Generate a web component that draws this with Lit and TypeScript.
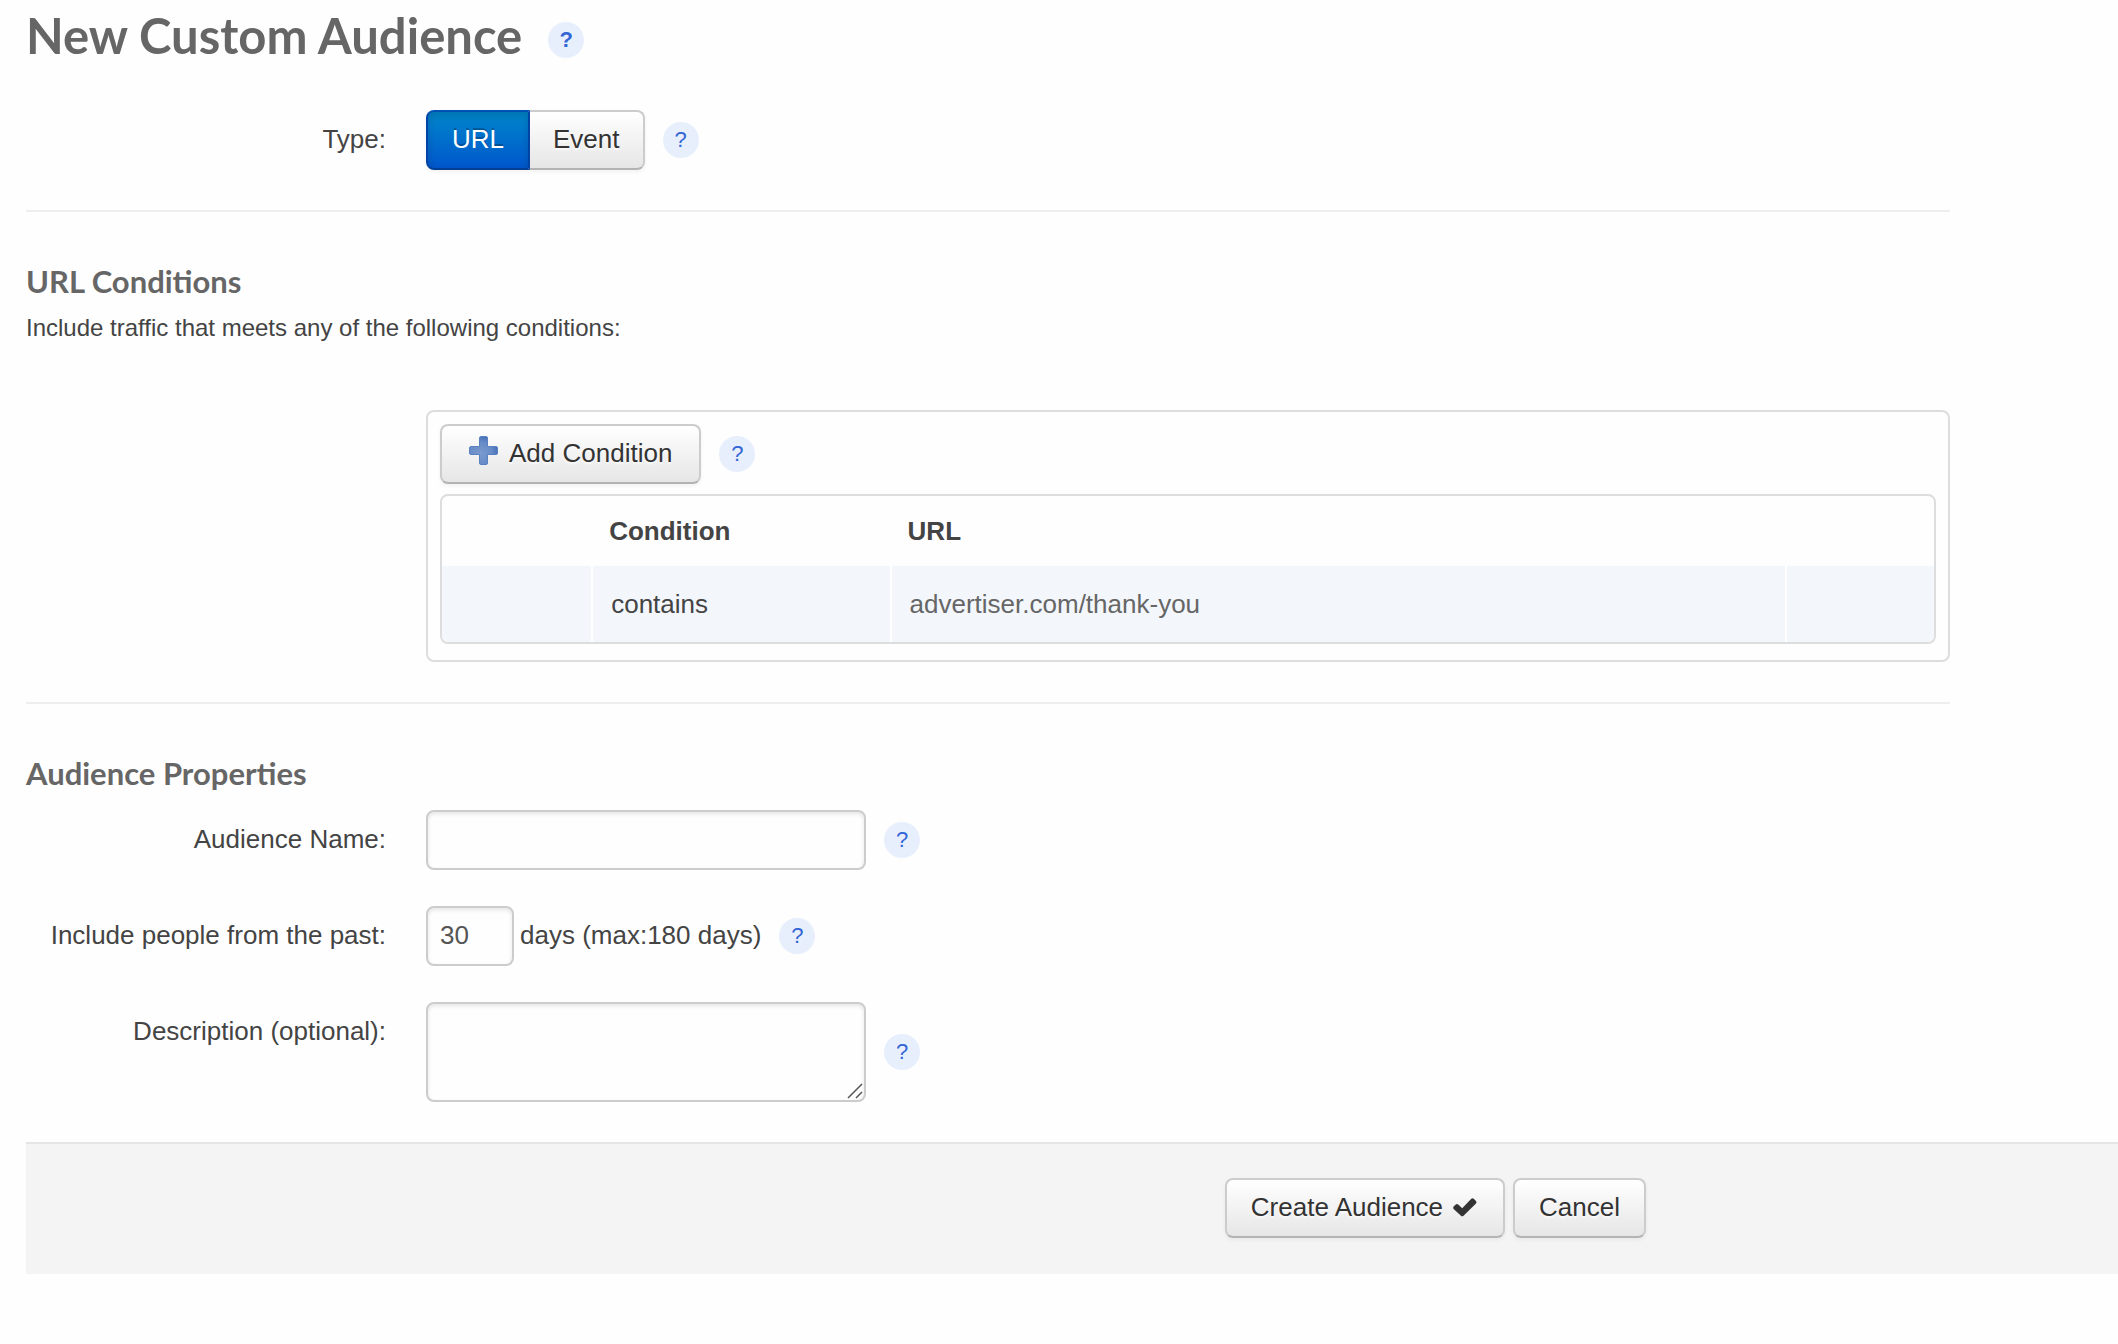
import { LitElement, html, css, svg } from "lit";
import { customElement, state } from "lit/decorators.js";
import { classMap } from "lit/directives/class-map.js";

@customElement("help-badge")
class HelpBadge extends LitElement {
  static styles = css`
    :host {
      display: block;
      flex: none;
    }
    .badge {
      display: flex;
      align-items: center;
      justify-content: center;
      width: 36px;
      height: 36px;
      margin: 0;
      padding: 0;
      border: 0;
      border-radius: 50%;
      background: #e8effc;
      color: #3366d6;
      font-family: inherit;
      font-size: 22px;
      font-weight: inherit;
      line-height: 36px;
      cursor: help;
    }
  `;

  render() {
    return html`<button class="badge" type="button">?</button>`;
  }
}

const plusIcon = html`
  <svg class="plus" width="29" height="29" viewBox="0 0 29 29" aria-hidden="true">
    <defs>
      <radialGradient id="plus-fill" cx="0.4" cy="0.6" r="0.65">
        <stop offset="0" stop-color="#7a9ace" />
        <stop offset="0.6" stop-color="#688cc8" />
        <stop offset="1" stop-color="#416db6" />
      </radialGradient>
    </defs>
    ${svg`<path
      d="M12 0.500h5a1.500 1.500 0 0 1 1.500 1.500v8.500h8.500a1.500 1.500 0 0 1 1.500 1.500v5a1.500 1.500 0 0 1-1.500 1.500h-8.500v8.500a1.500 1.500 0 0 1-1.500 1.500h-5a1.500 1.500 0 0 1-1.500-1.500v-8.500h-8.500a1.500 1.500 0 0 1-1.500-1.500v-5a1.500 1.500 0 0 1 1.500-1.500h8.500v-8.500a1.500 1.500 0 0 1 1.500-1.500z"
      fill="url(#plus-fill)" stroke="#5a82c0" stroke-width="1" />`}
  </svg>
`;

const checkIcon = html`
  <svg class="check" width="28" height="20" viewBox="0 0 28 20" aria-hidden="true">
    <path
      d="M2.600 9.600L4.800 7.400Q6 6.400 7.200 7.400L11.200 11.200L20.300 1.800Q21.500 0.700 22.700 1.800L25 4.100Q26 5.200 25 6.400L12.500 18.700Q11.200 19.700 10 18.700L2.600 11.900Q1.600 10.800 2.600 9.600Z"
      fill="#333"
    />
  </svg>
`;

@customElement("app-root")
class AppRoot extends LitElement {
  static styles = css`
    :host {
      display: block;
      min-height: 100vh;
      padding-left: 26px;
      box-sizing: border-box;
      background: #fefefe;
      color: #444;
      font-family: "Liberation Sans", Arial, Helvetica, sans-serif;
      font-size: 26px;
      line-height: 40px;
    }
    * {
      box-sizing: border-box;
    }
    .content {
      margin-right: 168px;
    }
    .title-row {
      display: flex;
      align-items: flex-end;
      gap: 26px;
      padding-top: 12px;
      font-weight: bold;
    }
    h1,
    h2 {
      margin: 0;
      color: #666;
      font-family: Lato, "Open Sans", sans-serif;
      font-weight: bold;
    }
    h1 {
      font-size: 49px;
      line-height: 46px;
    }
    h2 {
      padding-bottom: 2px;
      font-size: 31px;
      line-height: 38px;
    }
    .row {
      display: grid;
      grid-template-columns: 360px minmax(0, 1fr);
      column-gap: 40px;
    }
    .type-row {
      margin-top: 52px;
    }
    .label {
      line-height: 58px;
      text-align: right;
    }
    .controls {
      display: flex;
      align-items: center;
      gap: 18px;
    }
    .rule {
      height: 2px;
      margin: 40px 0 50px;
      border: 0;
      background: #eee;
    }
    .intro {
      margin: 6px 0 62px;
      font-size: 24px;
    }
    .btn {
      display: flex;
      align-items: center;
      height: 60px;
      margin: 0;
      padding: 0 24px 2px;
      border: 2px solid #ccc;
      border-bottom-color: #b3b3b3;
      border-radius: 8px;
      background: linear-gradient(#fff, #e6e6e6);
      box-shadow: inset 0 2px 0 rgba(255, 255, 255, 0.2), 0 2px 4px rgba(0, 0, 0, 0.05);
      color: #333;
      font-family: inherit;
      font-size: 26px;
      line-height: 40px;
      text-shadow: 0 2px 2px rgba(255, 255, 255, 0.75);
      cursor: pointer;
    }
    .segments {
      display: flex;
    }
    .segments .btn:first-child {
      border-radius: 8px 0 0 8px;
    }
    .segments .btn:last-child {
      padding: 0 23px 2px;
      border-left-width: 0;
      border-radius: 0 8px 8px 0;
    }
    .segments .btn.active {
      border-color: #0050b4 #0044a8 #003f94;
      background: linear-gradient(#0088cc, #0055cc) border-box;
      box-shadow: inset 0 4px 8px rgba(0, 0, 0, 0.15), 0 2px 4px rgba(0, 0, 0, 0.05);
      color: #fff;
      text-shadow: 0 -2px 0 rgba(0, 0, 0, 0.25);
    }
    .panel {
      grid-column: 2;
      padding: 12px 12px 16px;
      border: 2px solid #ddd;
      border-radius: 8px;
    }
    .btn.add {
      gap: 11px;
      padding: 0 27px 2px;
    }
    .plus {
      margin-bottom: 6px;
    }
    .conditions {
      width: 100%;
      margin-top: 10px;
      border: 2px solid #ddd;
      border-radius: 8px;
      border-spacing: 0;
      table-layout: fixed;
      overflow: hidden;
    }
    .narrow {
      width: 10%;
    }
    .medium {
      width: 20%;
    }
    th,
    td {
      padding: 0 18px;
      text-align: left;
    }
    th {
      height: 70px;
    }
    td {
      height: 76px;
      border-left: 2px solid #fefefe;
      background: #f3f7fc;
    }
    td:first-child {
      border-left: 0;
    }
    .url {
      color: #666;
    }
    .fields {
      display: flex;
      flex-direction: column;
      gap: 36px;
      margin-top: 16px;
    }
    .field {
      width: 440px;
      height: 60px;
      margin: 0;
      padding: 7px 12px 9px;
      border: 2px solid #ccc;
      border-radius: 8px;
      outline: 0;
      background: #fefefe;
      box-shadow: inset 0 2px 4px rgba(0, 0, 0, 0.1);
      color: #555;
      font-family: inherit;
      font-size: 26px;
      line-height: 40px;
    }
    .days {
      width: 88px;
    }
    .with-unit {
      display: flex;
      align-items: center;
      gap: 6px;
    }
    .unit {
      padding-bottom: 2px;
    }
    .area {
      position: relative;
      display: flex;
    }
    textarea.field {
      height: 100px;
      resize: none;
    }
    .grip {
      position: absolute;
      right: 3px;
      bottom: 3px;
      pointer-events: none;
    }
    .actions {
      display: flex;
      justify-content: flex-end;
      gap: 8px;
      margin-top: 40px;
      padding: 34px 472px 36px 0;
      border-top: 2px solid #e5e5e5;
      background: #f4f4f4;
    }
    .check {
      margin-left: 8px;
    }
  `;

  @state() private kind = "URL";
  @state() private rows = [{ condition: "contains", url: "advertiser.com/thank-you" }];

  private addRow() {
    this.rows = [...this.rows, { condition: "contains", url: "" }];
  }

  render() {
    return html`
      <main class="content">
        <header class="title-row">
          <h1>New Custom Audience</h1>
          <help-badge></help-badge>
        </header>

        <div class="row type-row">
          <span class="label" id="type-label">Type:</span>
          <div class="controls">
            <div class="segments" role="group" aria-labelledby="type-label">
              ${["URL", "Event"].map(
                (name) => html`<button
                  type="button"
                  class=${classMap({ btn: true, active: this.kind === name })}
                  aria-pressed=${this.kind === name}
                  @click=${() => (this.kind = name)}
                >${name}</button>`
              )}
            </div>
            <help-badge></help-badge>
          </div>
        </div>

        <hr class="rule" />

        <section>
          <h2>URL Conditions</h2>
          <p class="intro">Include traffic that meets any of the following conditions:</p>
          <div class="row">
            <div class="panel">
              <div class="controls">
                <button type="button" class="btn add" @click=${this.addRow}>${plusIcon}Add Condition</button>
                <help-badge></help-badge>
              </div>
              <table class="conditions">
                <colgroup>
                  <col class="narrow" />
                  <col class="medium" />
                  <col />
                  <col class="narrow" />
                </colgroup>
                <thead>
                  <tr>
                    <th></th>
                    <th scope="col">Condition</th>
                    <th scope="col">URL</th>
                    <th></th>
                  </tr>
                </thead>
                <tbody>
                  ${this.rows.map(
                    (row) => html`<tr>
                      <td></td>
                      <td>${row.condition}</td>
                      <td class="url">${row.url}</td>
                      <td></td>
                    </tr>`
                  )}
                </tbody>
              </table>
            </div>
          </div>
        </section>

        <hr class="rule" />

        <section>
          <h2>Audience Properties</h2>
          <div class="fields">
            <div class="row">
              <label class="label" for="name">Audience Name:</label>
              <div class="controls">
                <input class="field" id="name" type="text" />
                <help-badge></help-badge>
              </div>
            </div>
            <div class="row">
              <label class="label" for="days">Include people from the past:</label>
              <div class="controls">
                <div class="with-unit">
                  <input class="field days" id="days" type="text" inputmode="numeric" value="30" />
                  <span class="unit">days (max:180 days)</span>
                </div>
                <help-badge></help-badge>
              </div>
            </div>
            <div class="row">
              <label class="label" for="description">Description (optional):</label>
              <div class="controls">
                <div class="area">
                  <textarea class="field" id="description"></textarea>
                  <svg class="grip" width="16" height="16" viewBox="0 0 16 16" aria-hidden="true">
                    <path d="M1 15L15 1M9 15L15 9" stroke="#555" stroke-width="1.500" />
                  </svg>
                </div>
                <help-badge></help-badge>
              </div>
            </div>
          </div>
        </section>
      </main>

      <footer class="actions">
        <button type="button" class="btn">Create Audience${checkIcon}</button>
        <button type="button" class="btn">Cancel</button>
      </footer>
    `;
  }
}
